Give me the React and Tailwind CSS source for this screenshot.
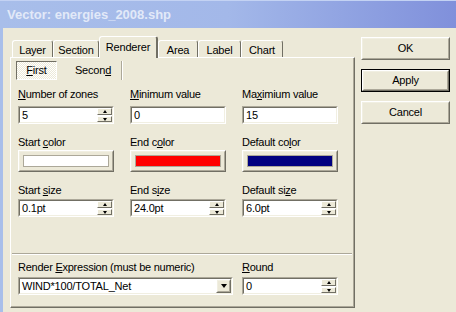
import React from 'react';

const U = ({ children }) => <span className="underline underline-offset-[1px]">{children}</span>;

// classic 3D sunken edit frame
const Sunken = ({ className = '', children }) => (
  <div className={`border border-t-[#ACA899] border-l-[#ACA899] border-b-white border-r-white ${className}`}>
    <div className="h-full border border-t-[#716F64] border-l-[#716F64] border-b-[#F1EFE2] border-r-[#F1EFE2] bg-white flex items-stretch">
      {children}
    </div>
  </div>
);

// classic 3D raised frame
const Raised = ({ className = '', innerClass = '', children }) => (
  <div className={`border border-t-white border-l-white border-b-[#716F64] border-r-[#716F64] ${className}`}>
    <div className={`h-full border border-t-[#F1EFE2] border-l-[#F1EFE2] border-b-[#ACA899] border-r-[#ACA899] ${innerClass}`}>
      {children}
    </div>
  </div>
);

const Up = () => <div className="w-0 h-0 border-x-[2.5px] border-x-transparent border-b-[3px] border-b-black" />;
const Down = () => <div className="w-0 h-0 border-x-[2.5px] border-x-transparent border-t-[3px] border-t-black" />;

const SpinEdit = ({ value, className = '' }) => (
  <Sunken className={`h-[18px] ${className}`}>
    <span className="flex-1 pl-[2px] leading-[14px] text-[11px] tracking-[-0.2px]">{value}</span>
    <div className="w-[15px] flex flex-col gap-[1px] mr-[0px]">
      <Raised className="h-[7px]" innerClass="flex items-center justify-center bg-[#ECE9D8] border-0"><Up /></Raised>
      <Raised className="h-[6px]" innerClass="flex items-center justify-center bg-[#ECE9D8] border-0"><Down /></Raised>
    </div>
  </Sunken>
);

const Edit = ({ value }) => (
  <Sunken className="h-[18px]">
    <span className="flex-1 pl-[2px] leading-[14px] text-[11px]">{value}</span>
  </Sunken>
);

const Label = ({ children, className = '' }) => (
  <div className={`text-[11px] leading-[13px] tracking-[-0.25px] ${className}`}>{children}</div>
);

const ColorButton = ({ color }) => (
  <Raised className="h-[22px]" innerClass="p-[3px]">
    <div className="h-full border border-[#ACA899]" style={{ background: color }} />
  </Raised>
);

const Tab = ({ label, w, active }) =>
  active ? (
    <div
      className={`relative z-10 -mb-[1px] h-[22px] ${w} bg-[#ECE9D8] border-l border-t border-white border-r-2 border-r-[#716F64] rounded-t-[3px] flex justify-center pt-[2px]`}
    >
      {label}
    </div>
  ) : (
    <div
      className={`h-[17px] ${w} border-l border-t border-white border-r border-r-[#716F64] rounded-t-[3px] flex justify-center pt-[1px]`}
    >
      {label}
    </div>
  );

export default function App() {
  return (
    <div className="w-[456px] h-[312px] overflow-hidden bg-[#ECE9D8] flex flex-col font-['Liberation_Sans',Arial,sans-serif] text-black">
      {/* title bar */}
      <div className="h-[28px] shrink-0 bg-gradient-to-r from-[#A8BEEA] via-[#A3B8E9] to-[#8090DB] border-t border-[#C3D2F3] flex items-center pl-[7px]">
        <span className="text-[13px] font-bold text-[#E2E9F8]">Vector: energies_2008.shp</span>
      </div>

      <div className="flex-1 flex border-l-[3px] border-[#A9BFEA]">
        {/* tabbed area */}
        <div className="ml-[7px] mt-[8px] w-[345px] flex flex-col">
          <div className="h-[21px] flex items-end pl-[2px] text-[11px] tracking-[-0.2px]">
            <Tab label="Layer" w="w-[41px]" />
            <Tab label="Section" w="w-[46px]" />
            <Tab label="Renderer" w="w-[59px]" active />
            <Tab label="Area" w="w-[40px]" />
            <Tab label="Label" w="w-[43px]" />
            <Tab label="Chart" w="w-[42px]" />
          </div>

          <div className="h-[251px] border border-t-white border-l-white border-b-[#716F64] border-r-[#716F64]">
            <div className="h-full border-b border-r border-b-[#ACA899] border-r-[#ACA899] flex flex-col">
              {/* sub tabs */}
              <div className="ml-[5px] mt-[3px] h-[19px] flex items-stretch text-[11px] tracking-[-0.2px]">
                <div className="w-[41px] border border-t-[#716F64] border-l-[#716F64] border-b-white border-r-white bg-[repeating-conic-gradient(#ffffff_0%_25%,#ECE9D8_0%_50%)] bg-[length:2px_2px] flex items-center justify-center">
                  <span><U>F</U>irst</span>
                </div>
                <div className="w-[64px] flex items-center justify-center pl-[8px]">
                  <span>Secon<U>d</U></span>
                </div>
                <div className="w-[2px] border-l border-l-[#ACA899] border-r border-r-white" />
              </div>

              {/* fields */}
              <div className="pl-[7px] mt-[8px] grid grid-cols-[96px_96px_96px] gap-x-[16px]">
                <div className="flex flex-col">
                  <Label><U>N</U>umber of zones</Label>
                  <SpinEdit value="5" className="mt-[5px]" />
                  <Label className="mt-[12px]">Start <U>c</U>olor</Label>
                  <div className="mt-[1px]"><ColorButton color="#ffffff" /></div>
                  <Label className="mt-[12px]">Start <U>s</U>ize</Label>
                  <SpinEdit value="0.1pt" className="mt-[2px]" />
                </div>
                <div className="flex flex-col">
                  <Label><U>M</U>inimum value</Label>
                  <div className="mt-[5px]"><Edit value="0" /></div>
                  <Label className="mt-[12px]">End c<U>o</U>lor</Label>
                  <div className="mt-[1px]"><ColorButton color="#ff0000" /></div>
                  <Label className="mt-[12px]">End s<U>i</U>ze</Label>
                  <SpinEdit value="24.0pt" className="mt-[2px]" />
                </div>
                <div className="flex flex-col">
                  <Label>Ma<U>x</U>imium value</Label>
                  <div className="mt-[5px]"><Edit value="15" /></div>
                  <Label className="mt-[12px]">Default co<U>l</U>or</Label>
                  <div className="mt-[1px]"><ColorButton color="#000080" /></div>
                  <Label className="mt-[12px]">Default si<U>z</U>e</Label>
                  <SpinEdit value="6.0pt" className="mt-[2px]" />
                </div>
              </div>

              {/* separator */}
              <div className="mt-[36px] ml-[1px] w-[340px] h-[2px] border-t border-t-[#ACA899] border-b border-b-white" />

              <div className="pl-[7px] mt-[6px] grid grid-cols-[215px_96px] gap-x-[9px]">
                <div className="flex flex-col">
                  <Label>Render <U>E</U>xpression (must be numeric)</Label>
                  <Sunken className="mt-[3px] h-[18px]">
                    <span className="flex-1 pl-[2px] leading-[14px] text-[11px] tracking-[-0.2px]">WIND*100/TOTAL_Net</span>
                    <Raised className="w-[15px]" innerClass="flex items-center justify-center bg-[#ECE9D8]">
                      <div className="w-0 h-0 border-x-[3.5px] border-x-transparent border-t-[4px] border-t-black" />
                    </Raised>
                  </Sunken>
                </div>
                <div className="flex flex-col">
                  <Label><U>R</U>ound</Label>
                  <SpinEdit value="0" className="mt-[3px]" />
                </div>
              </div>
            </div>
          </div>
        </div>

        {/* buttons */}
        <div className="ml-[6px] mt-[9px] w-[89px] flex flex-col gap-[9px] text-[11px] tracking-[-0.2px]">
          <Raised className="h-[23px]" innerClass="flex items-center justify-center">OK</Raised>
          <div className="h-[23px] border border-black">
            <Raised className="h-full" innerClass="flex items-center justify-center">Apply</Raised>
          </div>
          <Raised className="h-[23px]" innerClass="flex items-center justify-center">Cancel</Raised>
        </div>
      </div>
    </div>
  );
}
